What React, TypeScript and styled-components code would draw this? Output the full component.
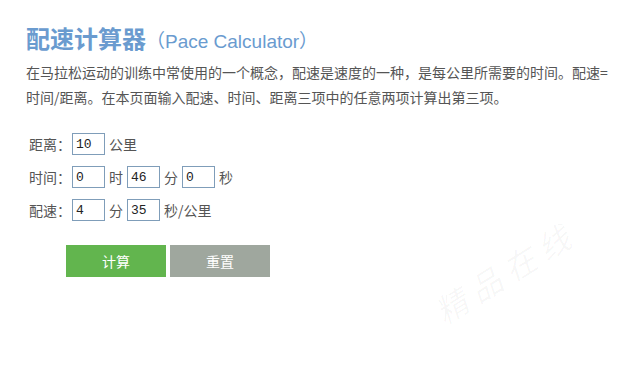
import React, { useState } from "react";
import styled, { createGlobalStyle } from "styled-components";

const GlobalStyle = createGlobalStyle`
  body {
    margin: 0;
    background: #fff;
    font-family: "Noto Sans CJK SC", "Liberation Sans", sans-serif;
  }
`;

function App() {
  const [km, setKm] = useState("10");
  const [hour, setHour] = useState("0");
  const [min, setMin] = useState("46");
  const [sec, setSec] = useState("0");
  const [paceMin, setPaceMin] = useState("4");
  const [paceSec, setPaceSec] = useState("35");

  return (
    <>
      <GlobalStyle />
      <Page>
        <Title>
          配速计算器<Sub>（Pace Calculator）</Sub>
        </Title>
        <Desc>
          在马拉松运动的训练中常使用的一个概念，配速是速度的一种，是每公里所需要的时间。配速=
          <br />
          时间/距离。在本页面输入配速、时间、距离三项中的任意两项计算出第三项。
        </Desc>
        <Form>
          <Row>
            <Label>距离：</Label>
            <Field value={km} onChange={(e) => setKm(e.target.value)} />
            <Unit>公里</Unit>
          </Row>
          <Row>
            <Label>时间：</Label>
            <Field value={hour} onChange={(e) => setHour(e.target.value)} />
            <Unit>时</Unit>
            <Field value={min} onChange={(e) => setMin(e.target.value)} />
            <Unit>分</Unit>
            <Field value={sec} onChange={(e) => setSec(e.target.value)} />
            <Unit>秒</Unit>
          </Row>
          <Row>
            <Label>配速：</Label>
            <Field value={paceMin} onChange={(e) => setPaceMin(e.target.value)} />
            <Unit>分</Unit>
            <Field value={paceSec} onChange={(e) => setPaceSec(e.target.value)} />
            <Unit>秒/公里</Unit>
          </Row>
        </Form>
        <Buttons>
          <Button $color="#62b54e">计算</Button>
          <Button $color="#9fa79e">重置</Button>
        </Buttons>
        <Watermark>精品在线</Watermark>
      </Page>
    </>
  );
}

export default App;

const Page = styled.div`
  position: relative;
  width: 629px;
  height: 374px;
  padding: 23px 0 0 26px;
  box-sizing: border-box;
  overflow: hidden;
`;

const Title = styled.h1`
  margin: 0;
  font-size: 24px;
  line-height: 30px;
  font-weight: bold;
  color: #6a9bcf;
  white-space: nowrap;
`;

const Sub = styled.span`
  font-size: 19px;
  font-weight: normal;
  font-family: "Liberation Sans", "Noto Sans CJK SC", sans-serif;
`;

const Desc = styled.p`
  margin: 3px 0 0;
  font-size: 14px;
  line-height: 25px;
  color: #555;
  white-space: nowrap;
`;

const Form = styled.div`
  margin-top: 23px;
  padding-left: 3px;
  display: flex;
  flex-direction: column;
  gap: 11px;
`;

const Row = styled.div`
  display: flex;
  align-items: center;
  height: 22px;
  font-size: 14px;
  color: #555;
`;

const Label = styled.span`
  width: 43px;
`;

const Field = styled.input`
  width: 33px;
  height: 22px;
  box-sizing: border-box;
  border: 1px solid #7f9db9;
  padding: 0 3px;
  font-family: "Liberation Mono", monospace;
  font-size: 13px;
  color: #222;
  outline: none;
`;

const Unit = styled.span`
  margin: 0 4px;
`;

const Buttons = styled.div`
  display: flex;
  gap: 4px;
  margin: 24px 0 0 40px;
`;

const Button = styled.button<{ $color: string }>`
  width: 100px;
  height: 32px;
  border: none;
  background: ${(p) => p.$color};
  color: #fff;
  font-family: "Noto Sans CJK SC", sans-serif;
  font-size: 14px;
  cursor: pointer;
`;

const Watermark = styled.div`
  position: absolute;
  left: 425px;
  top: 248px;
  transform: rotate(-32deg);
  font-size: 32px;
  font-style: italic;
  letter-spacing: 8px;
  color: rgba(0, 0, 0, 0.035);
  pointer-events: none;
`;
